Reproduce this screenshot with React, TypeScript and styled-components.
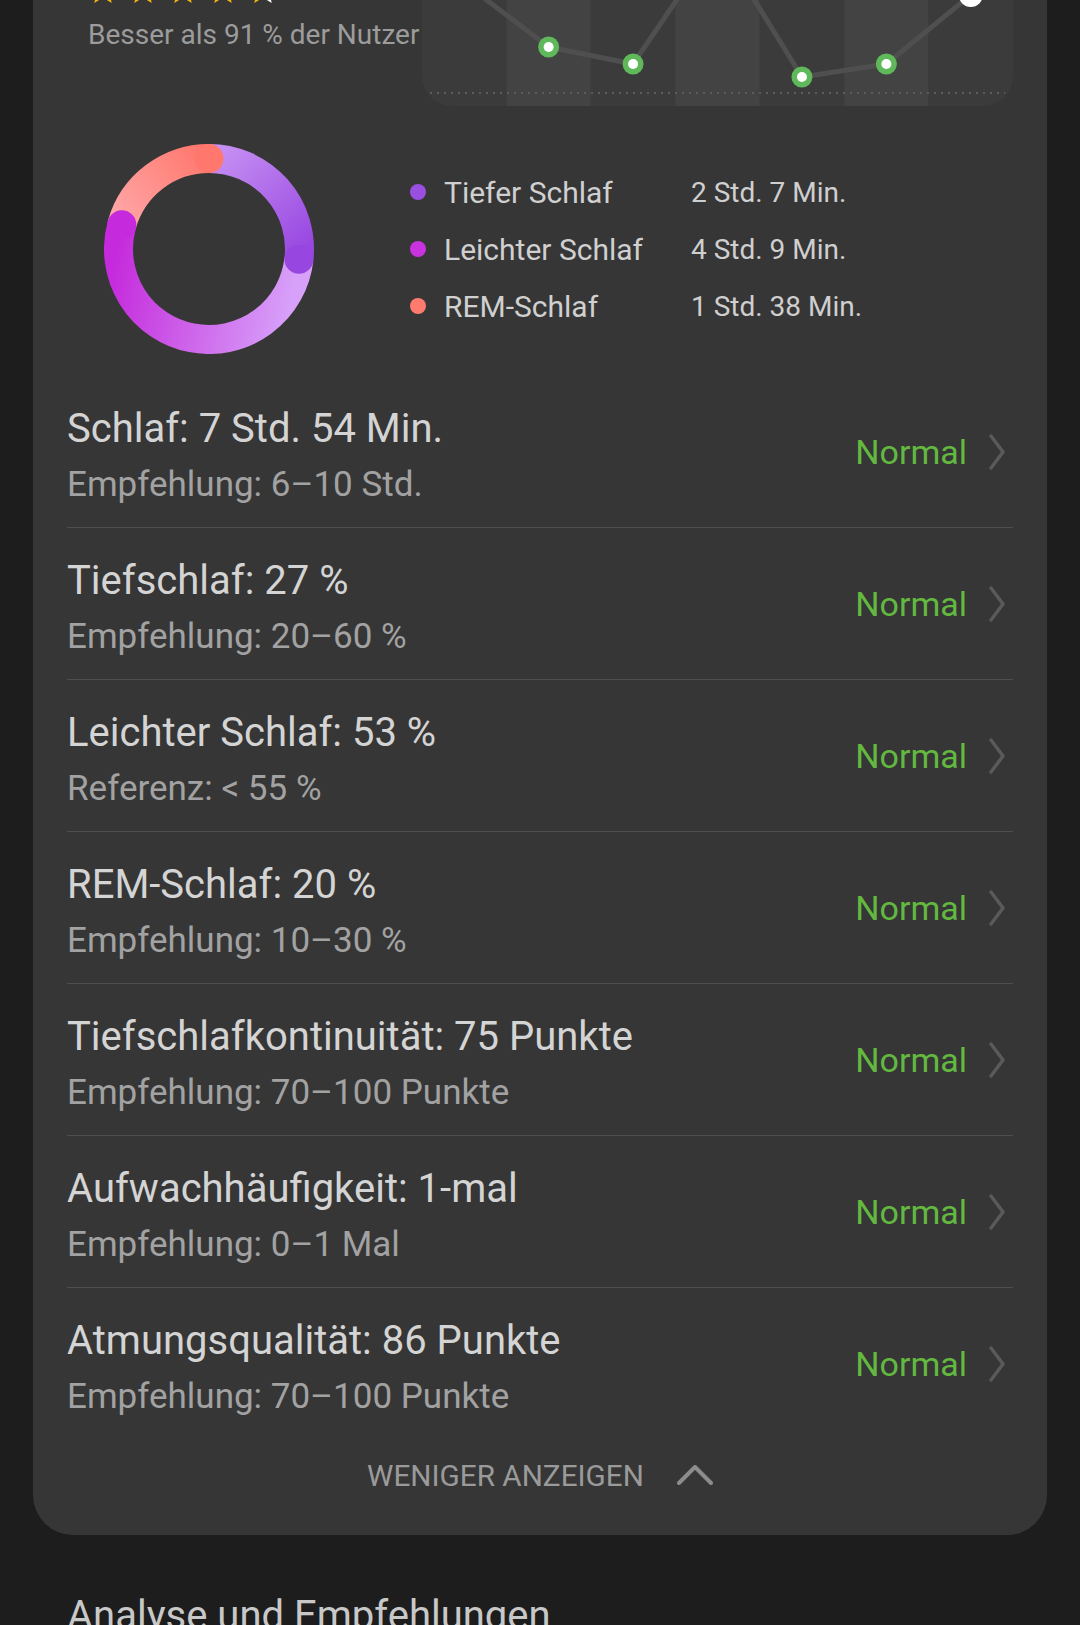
import * as React from 'react'
import styled, {createGlobalStyle} from 'styled-components'

const GlobalStyle = createGlobalStyle`
  html, body {
    margin: 0;
    padding: 0;
    background: #1d1d1d;
  }
  body {
    font-family: Roboto, "Noto Sans", "Liberation Sans", sans-serif;
    -webkit-font-smoothing: antialiased;
  }
`

const Page = styled.div`
  width: 1080px;
  height: 1625px;
  overflow: hidden;
  padding: 0 33px;
  box-sizing: border-box;
`

const Card = styled.div`
  background: #363636;
  border-radius: 0 0 40px 40px;
  padding: 0 34px 24px;
`

const Top = styled.div`
  display: flex;
  justify-content: space-between;
  height: 106px;
`

const Rating = styled.div`
  display: flex;
  flex-direction: column;
  padding-left: 21px;
`

const Stars = styled.div`
  display: flex;
  gap: 10px;
  margin-top: -25px;
  height: 30px;
`

const Better = styled.div`
  margin-top: 13px;
  font-size: 28px;
  line-height: 34px;
  color: #9c9c9c;
`

const ChartPanel = styled.div`
  width: 591px;
  height: 106px;
  background: #3b3b3b;
  border-radius: 0 0 30px 30px;
  overflow: hidden;
  svg {
    display: block;
  }
`

const DonutRow = styled.div`
  display: flex;
  align-items: center;
  padding: 38px 0 22px 37px;
`

const Legend = styled.div`
  display: grid;
  grid-template-columns: 16px 229px auto;
  column-gap: 18px;
  grid-auto-rows: 57px;
  align-items: center;
  margin-left: 96px;
`

const Dot = styled.span<{$c: string}>`
  width: 16px;
  height: 16px;
  border-radius: 50%;
  background: ${p => p.$c};
`

const LegendLabel = styled.span`
  font-size: 30px;
  color: #d0d0d0;
`

const LegendValue = styled.span`
  font-size: 28px;
  color: #cfcfcf;
`

const Row = styled.div`
  display: flex;
  align-items: center;
  justify-content: space-between;
  padding: 30px 0 22px;
  & + & {
    border-top: 1.5px solid #4e4e4e;
  }
`

const RowText = styled.div`
  display: flex;
  flex-direction: column;
  gap: 13px;
`

const Title = styled.div`
  font-size: 40px;
  line-height: 46px;
  color: #d4d4d4;
`

const Sub = styled.div`
  font-size: 35px;
  line-height: 40px;
  color: #a2a2a2;
`

const Status = styled.div`
  display: flex;
  align-items: center;
  gap: 22px;
  padding-right: 8px;
  margin-bottom: 8px;
`

const Normal = styled.span`
  font-size: 34px;
  color: #63b940;
`

const ShowLess = styled.div`
  display: flex;
  align-items: center;
  justify-content: center;
  gap: 33px;
  height: 72px;
  font-size: 29.7px;
  color: #9a9a9a;
`

const Heading = styled.div`
  margin: 57px 0 0 34px;
  font-size: 40px;
  line-height: 48px;
  color: #c8c8c8;
`

const Star = ({half}: {half?: boolean}) => (
  <svg width="30" height="30" viewBox="0 0 30 30">
    <defs>
      <linearGradient id="halfStar" x1="0" x2="1" y1="0" y2="0">
        <stop offset="0.5" stopColor="#f6b90c" />
        <stop offset="0.5" stopColor="#ffffff" />
      </linearGradient>
    </defs>
    <polygon
      points="15,1 19,10.5 29,11.3 21.4,17.8 23.7,28 15,22.6 6.3,28 8.6,17.8 1,11.3 11,10.5"
      fill={half ? 'url(#halfStar)' : '#f6b90c'}
    />
  </svg>
)

const cols = [0, 1, 2, 3, 4, 5, 6]
const colW = 591 / 7
const pts = [-17, 47, 64, -60, 77, 64, -5]

const Chart = () => {
  const line = pts.map((y, i) => `${colW * i + colW / 2},${y}`).join(' ')
  return (
    <svg width="591" height="106" viewBox="0 0 591 106">
      {cols.map(i => (
        <rect key={i} x={i * colW} y={0} width={colW} height={106} fill={i % 2 ? '#434343' : '#3b3b3b'} />
      ))}
      <line x1="8" y1="93" x2="583" y2="93" stroke="#5c5c5c" strokeWidth="2" strokeDasharray="2 5" />
      <polyline points={line} fill="none" stroke="#4f4f4f" strokeWidth="5" strokeLinejoin="round" />
      {pts.map((y, i) =>
        i === 6 ? (
          <g key={i}>
            <circle cx={colW * i + colW / 2} cy={y} r="12" fill="#ffffff" />
            <circle cx={colW * i + colW / 2} cy={y} r="5" fill="#f4d2b8" />
          </g>
        ) : (
          <g key={i}>
            <circle cx={colW * i + colW / 2} cy={y} r="10.5" fill="#5fb85a" />
            <circle cx={colW * i + colW / 2} cy={y} r="5" fill="#ffffff" />
          </g>
        )
      )}
    </svg>
  )
}

const R = 90.5
const C = 105
const pos = (deg: number) => {
  const a = (deg * Math.PI) / 180
  return [C + R * Math.sin(a), C - R * Math.cos(a)]
}

const segments = [
  {id: 'deep', from: 0, to: 96.5, c1: '#c690f3', c2: '#9746e0'},
  {id: 'light', from: 96.5, to: 285.6, c1: '#d7a0f9', c2: '#c52bdc'},
  {id: 'rem', from: 285.6, to: 360, c1: '#ffa6a6', c2: '#ff776d'},
]

const Donut = () => (
  <svg width="210" height="210" viewBox="0 0 210 210">
    <defs>
      {segments.map(s => {
        const [x1, y1] = pos(s.from)
        const [x2, y2] = pos(s.to)
        return (
          <linearGradient key={s.id} id={`g-${s.id}`} gradientUnits="userSpaceOnUse" x1={x1} y1={y1} x2={x2} y2={y2}>
            <stop offset="0" stopColor={s.c1} />
            <stop offset="1" stopColor={s.c2} />
          </linearGradient>
        )
      })}
    </defs>
    {segments.map(s => {
      const [x1, y1] = pos(s.from)
      const [x2, y2] = pos(s.to)
      const large = s.to - s.from > 180 ? 1 : 0
      return (
        <path
          key={s.id}
          d={`M ${x1} ${y1} A ${R} ${R} 0 ${large} 1 ${x2} ${y2}`}
          fill="none"
          stroke={`url(#g-${s.id})`}
          strokeWidth="29"
        />
      )
    })}
    {segments.map(s => {
      const [x, y] = pos(s.to)
      return <circle key={s.id} cx={x} cy={y} r="14.5" fill={s.c2} />
    })}
  </svg>
)

const ChevronRight = () => (
  <svg width="16" height="36" viewBox="0 0 16 36">
    <polyline points="2,2 14,18 2,34" fill="none" stroke="#5a5a5a" strokeWidth="3.5" strokeLinecap="round" strokeLinejoin="round" />
  </svg>
)

const ChevronUp = () => (
  <svg width="36" height="20" viewBox="0 0 36 20">
    <polyline points="2,18 18,2 34,18" fill="none" stroke="#8c8c8c" strokeWidth="4" strokeLinecap="round" strokeLinejoin="round" />
  </svg>
)

const legend = [
  {c: '#9b4fe1', label: 'Tiefer Schlaf', value: '2 Std. 7 Min.'},
  {c: '#c933df', label: 'Leichter Schlaf', value: '4 Std. 9 Min.'},
  {c: '#ff7b6f', label: 'REM-Schlaf', value: '1 Std. 38 Min.'},
]

const rows = [
  {title: 'Schlaf: 7 Std. 54 Min.', sub: 'Empfehlung: 6–10 Std.'},
  {title: 'Tiefschlaf: 27 %', sub: 'Empfehlung: 20–60 %'},
  {title: 'Leichter Schlaf: 53 %', sub: 'Referenz: < 55 %'},
  {title: 'REM-Schlaf: 20 %', sub: 'Empfehlung: 10–30 %'},
  {title: 'Tiefschlafkontinuität: 75 Punkte', sub: 'Empfehlung: 70–100 Punkte'},
  {title: 'Aufwachhäufigkeit: 1-mal', sub: 'Empfehlung: 0–1 Mal'},
  {title: 'Atmungsqualität: 86 Punkte', sub: 'Empfehlung: 70–100 Punkte'},
]

export default function App() {
  return (
    <Page>
      <GlobalStyle />
      <Card>
        <Top>
          <Rating>
            <Stars>
              <Star />
              <Star />
              <Star />
              <Star />
              <Star half />
            </Stars>
            <Better>Besser als 91 % der Nutzer</Better>
          </Rating>
          <ChartPanel>
            <Chart />
          </ChartPanel>
        </Top>
        <DonutRow>
          <Donut />
          <Legend>
            {legend.map(l => (
              <React.Fragment key={l.label}>
                <Dot $c={l.c} />
                <LegendLabel>{l.label}</LegendLabel>
                <LegendValue>{l.value}</LegendValue>
              </React.Fragment>
            ))}
          </Legend>
        </DonutRow>
        {rows.map(r => (
          <Row key={r.title}>
            <RowText>
              <Title>{r.title}</Title>
              <Sub>{r.sub}</Sub>
            </RowText>
            <Status>
              <Normal>Normal</Normal>
              <ChevronRight />
            </Status>
          </Row>
        ))}
        <ShowLess>
          WENIGER ANZEIGEN
          <ChevronUp />
        </ShowLess>
      </Card>
      <Heading>Analyse und Empfehlungen</Heading>
    </Page>
  )
}
